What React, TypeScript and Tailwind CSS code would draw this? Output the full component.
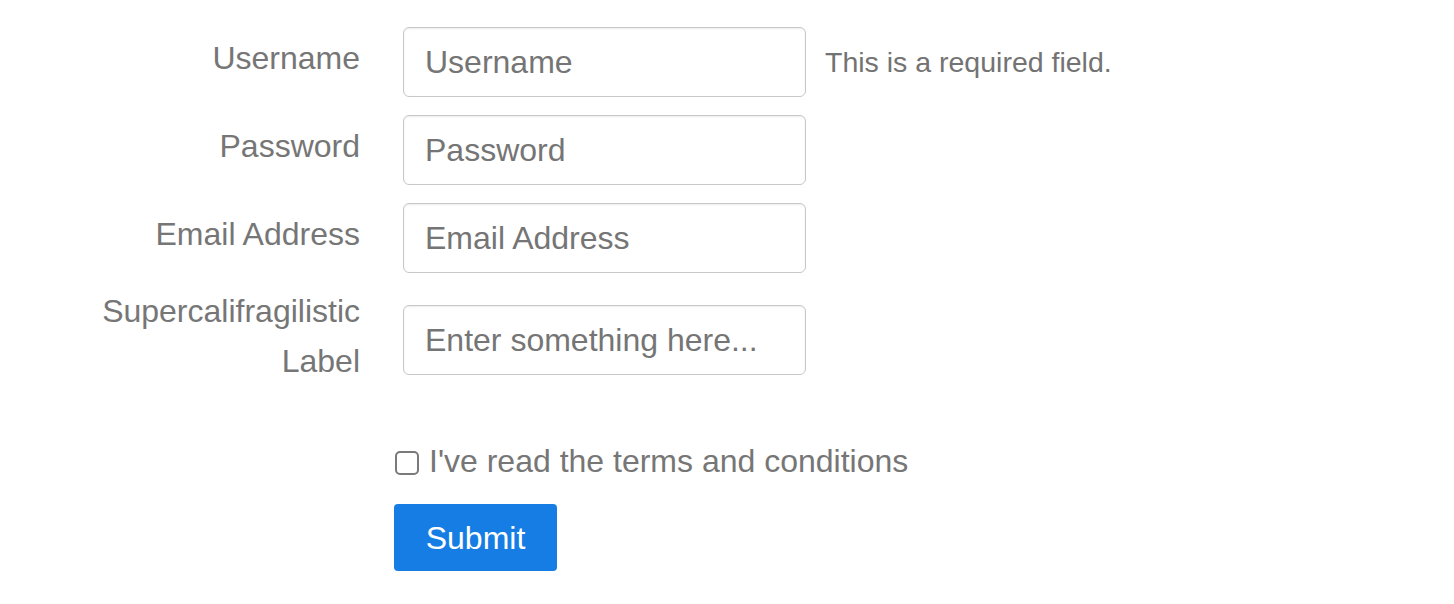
import React from 'react';

const fields = [
  { label: 'Username', placeholder: 'Username', help: 'This is a required field.' },
  { label: 'Password', placeholder: 'Password' },
  { label: 'Email Address', placeholder: 'Email Address' },
  { label: 'Supercalifragilistic Label', placeholder: 'Enter something here...' },
];

const App: React.FC = () => {
  return (
    <div className="min-h-[604px] bg-white pt-[27px] pl-[80px] font-['Liberation_Sans',Arial,sans-serif] text-[#767676]">
      <form className="flex flex-col" onSubmit={(e) => e.preventDefault()}>
        {fields.map((f, i) => (
          <div
            key={f.label}
            className={
              'flex items-center ' +
              (i === 2 ? 'mb-[13px]' : i === 3 ? '' : 'mb-[18px]')
            }
          >
            <label className="w-[280px] shrink-0 pb-[8px] text-right text-[32px] leading-[50px]">
              {f.label}
            </label>
            <input
              type={f.label === 'Password' ? 'password' : 'text'}
              placeholder={f.placeholder}
              className="ml-[43px] h-[70px] w-[403px] rounded-[6px] border border-[#c8c8c8] bg-white px-[21px] text-[32px] text-[#333] shadow-[inset_0_1px_2px_rgba(0,0,0,0.08)] outline-none placeholder:text-[#757575]"
            />
            {f.help && (
              <span className="ml-[19px] text-[28.5px] text-[#737373]">{f.help}</span>
            )}
          </div>
        ))}

        <div className="ml-[314px] mt-[42px] flex flex-col items-start">
          <label className="flex items-center text-[32px] leading-[50px]">
            <input
              type="checkbox"
              className="mt-[4px] mr-[10px] ml-[1px] h-[24px] w-[24px] appearance-none rounded-[5px] border-2 border-[#7a7a7a] bg-white"
            />
            I've read the terms and conditions
          </label>
          <button
            type="submit"
            className="mt-[18px] h-[67px] w-[163px] rounded-[4px] bg-[#167de4] text-[32px] text-white"
          >
            Submit
          </button>
        </div>
      </form>
    </div>
  );
};

export default App;
